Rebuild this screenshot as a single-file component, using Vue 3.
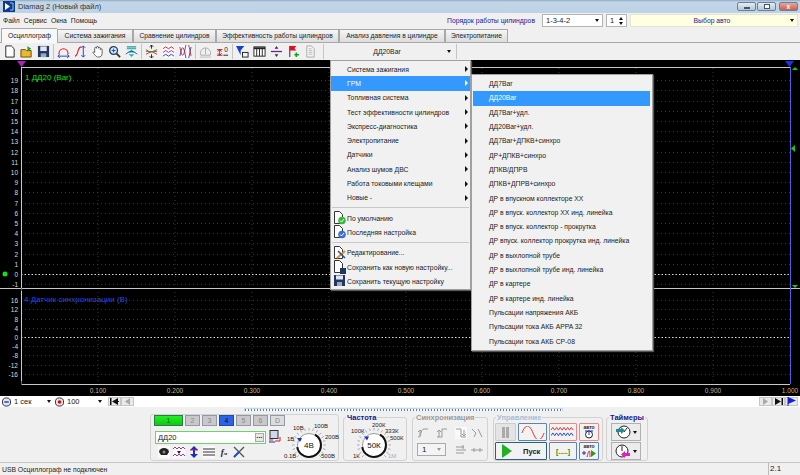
<template>
  <div class="app">
    <!-- window title -->
    <div class="titlebar">
      <svg class="app-icon" width="12" height="11" viewBox="0 0 12 11">
        <rect width="12" height="11" fill="#123a8c" />
        <path d="M2 2 L7 5.5 L2 9 Z" fill="#fff" />
        <path d="M7 2 h3 v7 h-3" fill="none" stroke="#7fc4ff" />
      </svg>
      <span class="title-text">Diamag 2 (Новый файл)</span>
      <div class="win-buttons">
        <div class="win-btn"><i class="w-min"></i></div>
        <div class="win-btn"><i class="w-max"></i></div>
        <div class="win-btn close"><span>x</span></div>
      </div>
    </div>

    <!-- menu + cylinder order -->
    <div class="menubar">
      <span class="menu-link first">Файл</span>
      <span class="menu-link">Сервис</span>
      <span class="menu-link">Окна</span>
      <span class="menu-link">Помощь</span>
      <span class="order-label">Порядок работы цилиндров</span>
      <div class="combo order-combo"><span>1-3-4-2</span><b class="arrow"></b></div>
      <div class="combo spin"><span>1</span><div class="spin-arrows"><b class="up"></b><b class="arrow"></b></div></div>
      <div class="combo auto-combo"><span class="auto-text">Выбор авто</span><b class="arrow"></b></div>
    </div>

    <!-- tabs -->
    <div class="tabs">
      <div v-for="t in tabs" :key="t.name" class="tab" :class="{ active: t.active }" :style="{ width: t.w + 'px' }">{{ t.name }}</div>
    </div>

    <!-- toolbar -->
    <div class="toolbar">
      <svg class="tool" viewBox="0 0 14 14"><path d="M3 1h6l3 3v9H3z" fill="#fff" stroke="#222" /></svg>
      <svg class="tool" viewBox="0 0 14 14"><path d="M1 5h5l1 1h5v7H1z" fill="#e8b830" stroke="#6b4a00" /><path d="M8 1l4 3-4 3z" fill="#2a9a2a" /></svg>
      <svg class="tool" viewBox="0 0 14 14"><rect x="1" y="1" width="12" height="12" fill="#23365f" /><rect x="3.500" y="1.500" width="7" height="5" fill="#dfe7f5" /><rect x="4" y="9" width="6" height="4" fill="#9aa8c4" /></svg>
      <i class="tool-sep"></i>
      <svg class="tool" viewBox="0 0 14 14"><path d="M2 10C2 2 12 2 12 10" fill="none" stroke="#e02020" stroke-width="1.200" /><path d="M1 12h12M1 12l2-2M1 12l2 2M13 12l-2-2M13 12l-2 2" stroke="#1840c8" fill="none" /></svg>
      <svg class="tool" viewBox="0 0 14 14"><path d="M1 12C5 12 3 2 8 2" fill="none" stroke="#e02020" stroke-width="1.200" /><path d="M10 1v12M10 1l-2 2M10 1l2 2M10 13l-2-2M10 13l2-2" stroke="#1840c8" fill="none" /></svg>
      <svg class="tool" viewBox="0 0 14 14"><path d="M4 8V3.500a1 1 0 012 0V2.500a1 1 0 012 0V3.500a1 1 0 012 0V5a1 1 0 012 0V9c0 3-2 4-4 4S5 12 2 8c1-1 2 0 2 0z" fill="#fff" stroke="#333" stroke-width=".8" /></svg>
      <svg class="tool" viewBox="0 0 14 14"><circle cx="6" cy="6" r="4.200" fill="#cfe6ff" stroke="#2b3a55" stroke-width="1.400" /><path d="M9 9l4 4" stroke="#333" stroke-width="2" /><path d="M4 6h4M6 4v4" stroke="#1840c8" /></svg>
      <svg class="tool" viewBox="0 0 14 14"><path d="M2 2h10M2 4h10" stroke="#12a090" stroke-width="1.200" /><path d="M7 5L3 8h8zM7 13l-3-3h6z" fill="#18b8a8" /><path d="M1 10C4 6 10 6 13 10" fill="none" stroke="#2040c0" /></svg>
      <i class="tool-sep"></i>
      <svg class="tool" viewBox="0 0 14 14"><path d="M7 0v4M5 2l2-2 2 2M7 14v-4M5 12l2 2 2-2" stroke="#222" fill="none" /><path d="M1 5l5 3 7-3M1 10l6-3 6 3" stroke="#d03030" fill="none" /><path d="M1 7h12" stroke="#2a9a2a" /></svg>
      <svg class="tool on" viewBox="0 0 14 14"><path d="M1 4l3-2 3 2 3-2 3 2" stroke="#d02020" fill="none" /><path d="M1 8l3-2 3 2 3-2 3 2" stroke="#a030a0" fill="none" /><path d="M1 12l3-2 3 2 3-2 3 2" stroke="#2040d0" fill="none" /></svg>
      <svg class="tool on" viewBox="0 0 14 14"><path d="M1 12C3 0 5 0 7 12S11 12 13 2" stroke="#2040d0" fill="none" /><path d="M1 2C3 14 5 14 7 2S11 2 13 12" stroke="#d02020" fill="none" /></svg>
      <i class="tool-sep"></i>
      <svg class="tool" viewBox="0 0 14 14"><path d="M2 11a5.500 5.500 0 1110 0z" fill="none" stroke="#aaa" /><path d="M7 3v7" stroke="#aaa" /><path d="M1 13h12" stroke="#bbb" /></svg>
      <svg class="tool" viewBox="0 0 14 14"><path d="M1 5h6M1 11h6M4 5v6M2 7l2-2 2 2M2 9l2 2 2-2" stroke="#a02020" fill="none" /><text x="9" y="8" class="tool-num">0</text><path d="M8 11h5" stroke="#222" /></svg>
      <i class="tool-sep"></i>
      <svg class="tool" viewBox="0 0 14 14"><path d="M0 1h9L5 6v5z" fill="#1840d0" /><rect x="7" y="8" width="6" height="5" fill="none" stroke="#222" /></svg>
      <svg class="tool" viewBox="0 0 14 14"><rect x="1" y="2" width="12" height="10" fill="#fff" stroke="#222" /><path d="M1 3.500h12" stroke="#222" stroke-width="2" /><path d="M4 3v9M7 3v9M10 3v9" stroke="#222" /></svg>
      <svg class="tool" viewBox="0 0 14 14"><path d="M1 7h12" stroke="#7020a0" stroke-width="1.400" /><path d="M7 1l-2 3h4zM7 13l-2-3h4z" fill="#333" /></svg>
      <svg class="tool" viewBox="0 0 14 14"><path d="M3 1v12" stroke="#222" /><path d="M3 1h7l-2 2.500L10 6H3z" fill="#e01020" /><path d="M10 8v5M8 10.500h5" stroke="#10a020" stroke-width="1.500" /></svg>
      <svg class="tool" viewBox="0 0 14 14"><path d="M3 1h5l3 3v9H3z" fill="#f4f4f4" stroke="#aaa" /><path d="M5 4h3M5 6h4M5 8h4M5 10h4" stroke="#bbb" /></svg>
      <i class="tool-sep last"></i>
      <div class="preset"><span>ДД20Bar</span><b class="arrow"></b></div>
      <i class="tool-sep"></i>
    </div>

    <!-- scope plot -->
    <svg class="plot" width="800" height="336" viewBox="0 60 800 336">
      <rect x="0" y="60" width="800" height="336" fill="#000" />
      <line v-for="x in gridX" :key="'v' + x" :x1="x" y1="68" :x2="x" y2="384" class="grid" />
      <line v-for="t in ticksA" :key="'a' + t.v" x1="21" :y1="t.y" x2="790" :y2="t.y" :class="t.v === 0 ? 'zero' : 'grid'" />
      <line v-for="t in ticksB" :key="'b' + t.v" x1="21" :y1="t.y" x2="790" :y2="t.y" :class="t.v === 0 ? 'zero' : 'grid'" />
      <text v-for="t in ticksA" :key="'la' + t.v" x="18" :y="t.y + 2.500" class="tick" text-anchor="end">{{ t.v }}</text>
      <text v-for="t in ticksB" :key="'lb' + t.v" x="18" :y="t.y + 2.500" class="tick" text-anchor="end">{{ t.v }}</text>
      <text v-for="l in xLabels" :key="l.t" :x="l.x" y="393" class="xtick" text-anchor="middle">{{ l.t }}</text>
      <path d="M21 67.500H790M0 288.500H800M21.500 67V384M21 384.500H790" stroke="#c8c8c8" fill="none" />
      <path d="M790.500 67V384" stroke="#4a60e0" fill="none" />
      <path d="M21.500 288V291M21.500 381V385" stroke="#a030c0" fill="none" />
      <text x="25" y="80" class="ch-a">1 ДД20 (Bar)</text>
      <text x="24" y="302" class="ch-b">4 Датчик синхронизации (В)</text>
      <path d="M17 61h9l-4.500 6z" fill="#b020c0" />
      <path d="M785 61h9l-4.500 6z" fill="#1c30f0" />
      <path d="M795 67l3 3h-6z" fill="#18c818" />
      <path d="M792 285h6l-3 3z" fill="#18c818" />
      <path d="M795 145l-4 3.500 4 3.500z" fill="#18c818" />
      <circle cx="5" cy="274" r="2.500" fill="#18e018" />
    </svg>

    <!-- time scale + scroll -->
    <div class="scrollrow">
      <svg width="11" height="10" viewBox="0 0 11 11"><circle cx="5.500" cy="5.500" r="4.500" fill="#dfe6f5" stroke="#223" /><path d="M3 5.500h5" stroke="#1030a0" stroke-width="1.400" /></svg>
      <div class="flat-combo w1"><span>1 сек</span><b class="arrow"></b></div>
      <svg width="11" height="10" viewBox="0 0 11 11"><circle cx="5.500" cy="5.500" r="4.500" fill="#f4e0e0" stroke="#223" /><circle cx="5.500" cy="5.500" r="2" fill="#c01020" /></svg>
      <div class="flat-combo w2"><span>100</span><b class="arrow"></b></div>
      <div class="nav"><svg width="9" height="7" viewBox="0 0 9 7"><path d="M0 0h1.500v7H0zM8 0v7L2 3.500z" fill="#111" /><path d="M7 3h2v1H7z" fill="#111" /></svg></div>
      <div class="nav dim"><svg width="5" height="7" viewBox="0 0 5 7"><path d="M5 0v7L0 3.500z" fill="#aaa" /></svg></div>
      <div class="track"><div class="slider"></div></div>
      <div class="nav dim"><svg width="5" height="7" viewBox="0 0 5 7"><path d="M0 0v7l5-3.500z" fill="#aaa" /></svg></div>
      <div class="nav"><svg width="9" height="7" viewBox="0 0 9 7"><path d="M9 0H7.500v7H9zM1 0v7l6-3.500z" fill="#111" /></svg></div>
      <div class="nav"><svg width="9" height="9" viewBox="0 0 9 9"><path d="M1 0v9" stroke="#1020e0" /><path d="M1 0l8 3.500L1 7z" fill="#1020e0" /></svg></div>
    </div>

    <!-- bottom controls -->
    <div class="panel">
      <div class="group g-channel">
        <div class="channel-col">
          <div class="ch-buttons">
            <div class="ch-btn green">1</div>
            <div class="ch-btn">2</div>
            <div class="ch-btn">3</div>
            <div class="ch-btn blue">4</div>
            <div class="ch-btn">5</div>
            <div class="ch-btn">6</div>
            <div class="ch-btn last">D</div>
          </div>
          <div class="ch-input-row">
            <div class="ch-input"><span>ДД20</span><div class="dots">...</div></div>
            <svg class="ch-save" width="13" height="14" viewBox="0 0 13 14"><rect x="2" y="0.500" width="8" height="8" fill="#cfd8e6" stroke="#333" /><path d="M1 10h4M12 7v4H7" stroke="#d02020" fill="none" /><path d="M1 12h6" stroke="#1030d0" /></svg>
          </div>
          <div class="ch-tools">
            <svg class="ct on" viewBox="0 0 12 12"><path d="M1 6a5 4 0 0110 0l-2 3H3z" fill="#222" /><circle cx="6" cy="6" r="1.500" fill="#888" /></svg>
            <svg class="ct on" viewBox="0 0 12 12"><path d="M0 3l2-2 2 2 2-2 2 2 2-2 2 2M0 10l2-2 2 2 2-2 2 2 2-2 2 2" stroke="#a030b0" fill="none" /><path d="M4 5h4L6 8z" fill="#222" /></svg>
            <svg class="ct" viewBox="0 0 12 12"><path d="M6 0L2 4h3v4H2l4 4 4-4H7V4h3z" fill="#1830c0" /><path d="M2 4h8" stroke="#c02060" /></svg>
            <svg class="ct on" viewBox="0 0 12 12"><path d="M0 3h12M0 6h12M0 9h12" stroke="#333" /></svg>
            <span class="ct fx">f<small>м</small></span>
            <svg class="ct" viewBox="0 0 12 12"><path d="M1 11L11 1M1 1l10 10" stroke="#555" stroke-width="1.400" /><path d="M1 11l5-5" stroke="#2050c0" stroke-width="2" /></svg>
          </div>
        </div>
        <svg class="knob k-volt" width="66" height="40" viewBox="0 0 66 40">
          <g class="knob-ticks"><line v-for="a in knobTicks" :key="a" :x1="kx(a, 14.500)" :y1="ky(a, 14.500)" :x2="kx(a, 17)" :y2="ky(a, 17)" /></g>
          <circle cx="32" cy="24" r="11.500" fill="#fff" stroke="#999" />
          <path :d="knobArc" fill="none" stroke="#111" stroke-width="2" />
          <path d="M20 17h5l-2 4z" fill="#1830d0" />
          <text x="32" y="27" class="knob-mid" text-anchor="middle">4В</text>
          <text x="16" y="9" class="knob-l">10В</text>
          <text x="37" y="7" class="knob-l">100В</text>
          <text x="10" y="20" class="knob-l">1В</text>
          <text x="48" y="18" class="knob-l">200В</text>
          <text x="7" y="37" class="knob-l">0.1В</text>
          <text x="44" y="37" class="knob-l">500В</text>
        </svg>
      </div>
      <div class="group g-freq">
        <span class="legend navy">Частота</span>
        <svg class="knob k-freq" width="62" height="40" viewBox="0 0 62 40">
          <g class="knob-ticks"><line v-for="a in knobTicks" :key="a" :x1="kx(a, 14.500)" :y1="ky(a, 14.500)" :x2="kx(a, 17)" :y2="ky(a, 17)" /></g>
          <circle cx="32" cy="24" r="11.500" fill="#fff" stroke="#999" />
          <path :d="knobArc" fill="none" stroke="#111" stroke-width="2" />
          <path d="M22 15.500h5l-2 4z" fill="#1830d0" />
          <text x="32" y="27" class="knob-mid" text-anchor="middle">50К</text>
          <text x="9" y="12" class="knob-l">100К</text>
          <text x="30" y="6" class="knob-l">200К</text>
          <text x="43" y="12" class="knob-l">333К</text>
          <text x="48" y="19" class="knob-l">500К</text>
          <text x="11" y="37" class="knob-l">1К</text>
          <text x="46" y="37" class="knob-l dim-l">1М</text>
        </svg>
      </div>
      <div class="group g-sync">
        <span class="legend grey">Синхронизация</span>
        <div class="sync-row">
          <svg class="sy" viewBox="0 0 12 12"><path d="M1 10c4 0 2-8 6-8h4M3 3v7M1 5l2-2 2 2" stroke="#999" fill="none" /></svg>
          <svg class="sy" viewBox="0 0 12 12"><path d="M1 10h5V2h5M3 3v7M1 5l2-2 2 2" stroke="#999" fill="none" /></svg>
          <svg class="sy on" viewBox="0 0 12 12"><path d="M1 2h5v8h5M9 3v6M7 7l2 2 2-2" stroke="#999" fill="none" /></svg>
          <svg class="sy tight" viewBox="0 0 12 12"><path d="M1 2l4 4-2 4M7 2l4 8" stroke="#999" fill="none" /></svg>
        </div>
        <div class="sync-row second">
          <div class="sync-combo"><span>1</span><b class="arrow grey-a"></b></div>
          <svg class="sy wide" viewBox="0 0 12 12"><path d="M1 3h8M1 6h10M1 9h8M8 1v4" stroke="#999" fill="none" /></svg>
          <svg class="sy tight" viewBox="0 0 12 12"><path d="M0 6h12M3 4v4M9 4v4" stroke="#999" fill="none" /></svg>
        </div>
      </div>
      <div class="group g-ctrl">
        <span class="legend pale">Управление</span>
        <div class="ctrl-grid">
          <div class="cbtn pause"><i></i><i></i></div>
          <div class="cbtn sine">
            <svg width="24" height="13" viewBox="0 0 26 13"><path d="M1 7C5-3 9-3 13 7S21 17 25 7" stroke="#e02020" fill="none" /></svg>
          </div>
          <div class="cbtn redb">
            <svg width="24" height="14" viewBox="0 0 26 14"><path d="M0 5l2-3 2 3 2-3 2 3 2-3 2 3 2-3 2 3 2-3 2 3 2-3 2 3" stroke="#d83030" fill="none" /><path d="M0 11l2-3 2 3 2-3 2 3 2-3 2 3 2-3 2 3 2-3 2 3 2-3 2 3" stroke="#2040d0" fill="none" /></svg>
          </div>
          <div class="cbtn redb stack">
            <span class="auto-l">авто</span>
            <svg width="12" height="9" viewBox="0 0 12 9"><circle cx="6" cy="4.500" r="3.500" fill="#fff" stroke="#222" /><path d="M2 1l8 0M6 2v3" stroke="#1830c0" /></svg>
          </div>
          <div class="cbtn start">
            <svg width="12" height="14" viewBox="0 0 12 14"><path d="M1 0l10 7-10 7z" fill="#22b020" /></svg>
            <span>Пуск</span>
          </div>
          <div class="cbtn bracket"><span>[.....]</span></div>
          <div class="cbtn stack">
            <span class="auto-l">авто</span>
            <svg width="14" height="9" viewBox="0 0 14 9"><path d="M0 4h4M2 2v4" stroke="#1830c0" /><path d="M5 8C7 0 8 0 8 8" stroke="#d02020" fill="none" /><path d="M9 1l5 3.500L9 8z" fill="#20a020" /></svg>
          </div>
        </div>
      </div>
      <div class="group g-timer">
        <span class="legend navy">Таймеры</span>
        <div class="timer-btn">
          <svg width="16" height="14" viewBox="0 0 16 14"><circle cx="9" cy="7" r="6" fill="#fff" stroke="#222" /><path d="M9 7l3-4" stroke="#222" /><path d="M1 4h5V2l4 3.500L6 9V7H1z" fill="#208c90" /></svg>
          <b class="arrow"></b>
        </div>
        <div class="timer-btn">
          <svg width="16" height="14" viewBox="0 0 16 14"><circle cx="7" cy="7" r="6" fill="#fff" stroke="#222" /><path d="M7 7V2" stroke="#222" /><path d="M15 9h-5V7L6 10.500l4 3.500v-2h5z" fill="#e020c0" /></svg>
          <b class="arrow"></b>
        </div>
      </div>
    </div>

    <!-- status -->
    <div class="statusbar">
      <span class="status-main">USB Осциллограф не подключен</span>
      <span class="status-ver">2.1</span>
    </div>

    <!-- open menus -->
    <div class="popup menu1">
      <template v-for="m in menu1" :key="m.t">
        <hr v-if="m.sep" />
        <div class="item" :class="{ hot: m.hot }">
          <span class="item-icon">
            <svg v-if="m.icon" width="13" height="14" viewBox="0 0 13 14">
              <template v-if="m.icon === 'floppy'">
                <rect x="1" y="1" width="11" height="11" fill="#23365f" /><rect x="3" y="1.500" width="7" height="4" fill="#dfe7f5" /><rect x="4" y="8" width="5" height="4" fill="#9aa8c4" />
              </template>
              <template v-else>
                <path d="M1.500 0.500h5l3 3v9h-8z" fill="#fff" stroke="#333" />
                <circle v-if="m.icon === 'ok'" cx="9" cy="9.500" r="3.800" fill="#3cb83c" />
                <circle v-if="m.icon === 'last'" cx="9" cy="9.500" r="3.800" fill="#3a70d0" />
                <path v-if="m.icon === 'ok' || m.icon === 'last'" d="M7 9.500l1.500 1.500 2.500-3" stroke="#fff" fill="none" />
                <path v-if="m.icon === 'edit'" d="M4 12L12 5" stroke="#e09020" stroke-width="2" />
                <path v-if="m.icon === 'edit'" d="M5 5l7 7" stroke="#2050c0" stroke-width="1.500" />
                <rect v-if="m.icon === 'saveas'" x="7" y="8" width="6" height="6" fill="#23365f" />
              </template>
            </svg>
          </span>
          <span class="item-text">{{ m.t }}</span>
          <b v-if="m.sub" class="sub-arrow"></b>
        </div>
      </template>
    </div>
    <div class="popup menu2">
      <div v-for="(m, i) in menu2" :key="m" class="item2" :class="{ hot: i === 1 }">{{ m }}</div>
    </div>
  </div>
</template>

<script setup>
const tabs = [
  { name: 'Осциллограф', w: 56, active: true },
  { name: 'Система зажигания', w: 76 },
  { name: 'Сравнение цилиндров', w: 83 },
  { name: 'Эффективность работы цилиндров', w: 123 },
  { name: 'Анализ давления в цилиндре', w: 106 },
  { name: 'Электропитание', w: 63 },
]

const gridX = [98, 175, 252, 329, 406, 482, 559, 636, 713]

const ticksA = []
for (let v = 19; v >= -1; v--) ticksA.push({ v, y: Math.round(274 - v * 10.2) + 0.5 })
const ticksB = []
for (let v = 16; v >= -16; v -= 4) ticksB.push({ v, y: Math.round(337 - v * 2.31) + 0.5 })

const xLabels = gridX.map((x, i) => ({ x, t: '0.' + (i + 1) + '00' }))
xLabels.push({ x: 790, t: '1.000' })

// both knobs sit at the same spot in their own svg
const knobTicks = []
for (let a = -225; a <= 45; a += 15) knobTicks.push(a)
const kx = (a, r) => 32 + r * Math.cos((a * Math.PI) / 180)
const ky = (a, r) => 24 + r * Math.sin((a * Math.PI) / 180)
const knobArc = `M${kx(-60, 12)} ${ky(-60, 12)} A12 12 0 1 1 ${kx(170, 12)} ${ky(170, 12)}`

const menu1 = [
  { t: 'Система зажигания', sub: true },
  { t: 'ГРМ', sub: true, hot: true },
  { t: 'Топливная система', sub: true },
  { t: 'Тест эффективности цилиндров', sub: true },
  { t: 'Экспресс-диагностика', sub: true },
  { t: 'Электропитание', sub: true },
  { t: 'Датчики', sub: true },
  { t: 'Анализ шумов ДВС', sub: true },
  { t: 'Работа токовыми клещами', sub: true },
  { t: 'Новые -', sub: true },
  { t: 'По умолчанию', sep: true, icon: 'ok' },
  { t: 'Последняя настройка', icon: 'last' },
  { t: 'Редактирование...', sep: true, icon: 'edit' },
  { t: 'Сохранить как новую настройку...', icon: 'saveas' },
  { t: 'Сохранить текущую настройку', icon: 'floppy' },
]

const menu2 = [
  'ДД7Bar',
  'ДД20Bar',
  'ДД7Bar+удл.',
  'ДД20Bar+удл.',
  'ДД7Bar+ДПКВ+синхро',
  'ДР+ДПКВ+синхро',
  'ДПКВ/ДПРВ',
  'ДПКВ+ДПРВ+синхро',
  'ДР в впускном коллекторе ХХ',
  'ДР в впуск. коллектор ХХ инд. линейка',
  'ДР в впуск. коллектор - прокрутка',
  'ДР впуск. коллектор прокрутка инд. линейка',
  'ДР в выхлопной трубе',
  'ДР в выхлопной трубе инд. линейка',
  'ДР в картере',
  'ДР в картере инд. линейка',
  'Пульсации напряжения АКБ',
  'Пульсации тока АКБ APPA 32',
  'Пульсации тока АКБ CP-08',
]
</script>

<style>
html, body {
  margin: 0;
  background: #f0f0f0;
  overflow: hidden;
}
</style>

<style scoped>
.app {
  position: relative;
  width: 800px;
  height: 475px;
  overflow: hidden;
  background: #f0f0f0;
  font-family: "Liberation Sans", Arial, sans-serif;
  font-size: 6.8px;
  color: #222;
  display: flex;
  flex-direction: column;
}

.titlebar {
  height: 13px;
  display: flex;
  align-items: center;
  background: linear-gradient(#8fa9c2 0, #c3d6e8 2px, #bdd2e6 100%);
  padding-left: 3px;
  flex: none;
}
.title-text {
  margin-left: 3px;
  font-size: 7.5px;
  color: #333;
}
.win-buttons {
  margin-left: auto;
  margin-right: 2px;
  display: flex;
  gap: 1px;
}
.win-btn {
  width: 19px;
  height: 9px;
  border: 1px solid #6b7f95;
  border-radius: 2px;
  box-sizing: border-box;
  background: linear-gradient(#e4edf5, #b4c6d8);
  display: flex;
  align-items: center;
  justify-content: center;
}
.win-btn.close {
  background: linear-gradient(#e5a79c, #c9604f);
  color: #fff;
  font-weight: bold;
  line-height: 6px;
  margin-left: 2px;
}
.win-btn .w-min {
  width: 6px;
  height: 2px;
  margin-top: 3px;
  background: #fff;
  border: 1px solid #456;
  box-sizing: border-box;
}
.win-btn .w-max {
  width: 6px;
  height: 5px;
  background: #fff;
  border: 1px solid #456;
  box-sizing: border-box;
}

.menubar {
  height: 15px;
  display: flex;
  align-items: center;
  background: #f0f0f0;
  flex: none;
}
.menu-link {
  margin-left: 4px;
}
.menu-link.first {
  margin-left: 3px;
}
.order-label {
  margin-left: auto;
  color: #141a9c;
  margin-right: 7px;
}
.combo {
  height: 13px;
  box-sizing: border-box;
  background: #fff;
  border: 1px solid #b4b4b4;
  display: flex;
  align-items: center;
  padding: 0 3px;
  margin-right: 3px;
  font-size: 7.5px;
}
.order-combo {
  width: 61px;
}
.spin {
  width: 21px;
}
.auto-combo {
  width: 168px;
  margin-right: 2px;
  background: #ffffe1;
  border-color: #e4e4d0;
}
.auto-text {
  flex: 1;
  text-align: center;
  color: #141a9c;
  font-size: 6.8px;
}
.arrow {
  display: block;
  margin-left: auto;
  width: 0;
  height: 0;
  border-left: 2.5px solid transparent;
  border-right: 2.5px solid transparent;
  border-top: 3px solid #111;
}
.grey-a {
  border-top-color: #999;
}
.spin-arrows {
  margin-left: auto;
  display: flex;
  flex-direction: column;
  gap: 2px;
}
.spin-arrows .up {
  width: 0;
  height: 0;
  border-left: 2.5px solid transparent;
  border-right: 2.5px solid transparent;
  border-bottom: 3px solid #111;
}

.tabs {
  height: 15px;
  display: flex;
  align-items: flex-end;
  padding-left: 1px;
  border-bottom: 1px solid #a8a8a8;
  box-sizing: border-box;
  flex: none;
}
.tab {
  height: 13px;
  line-height: 12px;
  box-sizing: border-box;
  text-align: center;
  background: linear-gradient(#f6f6f6, #dcdcdc);
  border: 1px solid #a8a8a8;
  border-bottom: none;
  white-space: nowrap;
  font-size: 6.7px;
}
.tab.active {
  height: 15px;
  line-height: 14px;
  background: #f8f8f8;
  margin-bottom: -1px;
  border-right: 0;
}

.toolbar {
  height: 17px;
  display: flex;
  align-items: center;
  padding-left: 3px;
  gap: 4px;
  flex: none;
}
.tool {
  width: 13px;
  height: 13px;
  flex: none;
}
.tool.on {
  background: #fafafa;
}
.tool-num {
  font-size: 7px;
  fill: #222;
}
.tool-sep {
  width: 1px;
  height: 15px;
  margin: 0 -1px;
  background: #c4c4c4;
  flex: none;
}
.tool-sep.last {
  margin-left: auto;
}
.preset {
  width: 126px;
  height: 15px;
  display: flex;
  align-items: center;
  padding-right: 2px;
  box-sizing: border-box;
}
.preset span {
  flex: 1;
  text-align: center;
}
.toolbar > .tool-sep:last-child {
  margin-right: 343px;
}

.plot {
  display: block;
  flex: none;
}
.grid {
  stroke: #363636;
  stroke-width: 1;
  stroke-dasharray: 1 3;
}
.zero {
  stroke: #dcdcdc;
  stroke-width: 1;
  stroke-dasharray: 1.5 2;
}
.tick {
  font-size: 6.5px;
  fill: #d8d8d8;
}
.xtick {
  font-size: 6.5px;
  fill: #c9b48a;
}
.ch-a {
  font-size: 8px;
  fill: #14e014;
}
.ch-b {
  font-size: 8px;
  fill: #2a48e0;
}

.scrollrow {
  height: 11px;
  display: flex;
  align-items: center;
  padding-left: 1px;
  padding-right: 2px;
  box-sizing: border-box;
  background: #fff;
  flex: none;
}
.flat-combo {
  display: flex;
  align-items: center;
  height: 11px;
  padding: 0 3px 0 2px;
  box-sizing: border-box;
  font-size: 7.5px;
}
.w1 {
  width: 42px;
}
.w2 {
  width: 40px;
  margin-right: 3px;
}
.nav {
  width: 13px;
  height: 9px;
  background: #eaeaea;
  border: 1px solid #c6c6c6;
  box-sizing: border-box;
  display: flex;
  align-items: center;
  justify-content: center;
  flex: none;
}
.track {
  flex: 1;
  align-self: stretch;
  position: relative;
}
.slider {
  position: absolute;
  left: 110px;
  bottom: -4px;
  width: 319px;
  height: 3px;
  box-sizing: border-box;
  border: 1px solid #c8d4e8;
  border-bottom: 0;
  background: #fff repeating-linear-gradient(90deg, #4a7ad8 0 1px, transparent 1px 3px);
}

.panel {
  flex: 1;
  display: flex;
  align-items: flex-end;
  padding: 0 0 1px 150px;
  box-sizing: border-box;
  min-height: 0;
}
.group {
  position: relative;
  height: 44px;
  box-sizing: border-box;
  border: 1px solid #d2d2d2;
  border-radius: 3px;
  flex: none;
}
.legend {
  position: absolute;
  top: -4px;
  left: 2px;
  background: #f0f0f0;
  padding: 0 1px;
  font-weight: bold;
  font-size: 7.5px;
  line-height: 8px;
  white-space: nowrap;
}
.navy {
  color: #14188c;
}
.grey {
  color: #9a9a9a;
}
.pale {
  color: #a8bcd8;
}

.g-channel {
  width: 189px;
  height: 47px;
  margin-right: 4px;
  display: flex;
  align-items: flex-start;
  padding-left: 3px;
}
.channel-col {
  width: 123px;
  flex: none;
  display: flex;
  flex-direction: column;
}
.ch-buttons {
  display: flex;
  gap: 2px;
}
.ch-btn {
  width: 15px;
  height: 11px;
  line-height: 10px;
  box-sizing: border-box;
  text-align: center;
  background: #c9c9c9;
  border: 1px solid #8f9aa8;
  color: #888;
  font-size: 7px;
  flex: none;
}
.ch-btn.green {
  width: 29px;
  background: linear-gradient(#20f020, #10c810);
  border-color: #2a7a4a;
  color: #063;
}
.ch-btn.blue {
  background: #2a62e8;
  border-color: #244a9a;
  color: #021048;
}
.ch-btn.last {
  background: #dcdcdc;
}
.ch-input-row {
  display: flex;
  align-items: center;
  margin: 4px 0 0 1px;
  gap: 2px;
}
.ch-input {
  width: 111px;
  height: 13px;
  flex: none;
  box-sizing: border-box;
  border: 1px solid #70d070;
  background: #fff;
  display: flex;
  align-items: center;
  padding-left: 2px;
  font-size: 7.5px;
}
.ch-save {
  flex: none;
}
.dots {
  margin-left: auto;
  width: 9px;
  height: 9px;
  margin-right: 1px;
  background: #e8e8e8;
  border: 1px solid #aaa;
  box-sizing: border-box;
  line-height: 4px;
  text-align: center;
  font-weight: bold;
}
.ch-tools {
  display: flex;
  gap: 3px;
  margin: 2px 0 0 4px;
  align-items: center;
}
.ct {
  width: 12px;
  height: 12px;
  flex: none;
}
.ct.on {
  background: #fafafa;
}
.fx {
  font-family: "Liberation Serif", serif;
  font-style: italic;
  font-weight: bold;
  font-size: 9px;
  line-height: 12px;
  text-align: center;
}
.fx small {
  font-size: 5px;
}
.knob {
  flex: none;
  overflow: visible;
}
.k-volt {
  margin-top: 6px;
}
.k-freq {
  display: block;
  margin: 3px 0 0 -2px;
}
.knob-ticks line {
  stroke: #aaa;
  stroke-width: 1;
}
.knob-mid {
  font-size: 8px;
  fill: #111;
}
.knob-l {
  font-size: 6px;
  fill: #222;
}
.dim-l {
  fill: #aaa;
}

.g-freq {
  width: 64px;
  margin-right: 5px;
}
.g-sync {
  width: 76px;
  margin-right: 5px;
  padding: 9px 0 0 4px;
}
.sync-row {
  display: flex;
  gap: 7px;
  align-items: center;
}
.sync-row.second {
  margin-top: 4px;
}
.sy {
  width: 12px;
  height: 12px;
  flex: none;
}
.sy.on {
  background: #fafafa;
}
.sy.tight {
  margin-left: -3px;
}
.sy.wide {
  margin-left: 2px;
}
.sync-combo {
  width: 29px;
  height: 13px;
  box-sizing: border-box;
  border: 1px solid #aaa;
  background: #f4f4f4;
  display: flex;
  align-items: center;
  padding: 0 4px;
  font-size: 8px;
}

.g-ctrl {
  width: 110px;
  margin-right: 3px;
  padding: 5px 0 0 1px;
}
.ctrl-grid {
  display: grid;
  grid-template-columns: 21px 29px 28px 20px;
  grid-template-rows: 18px 18px;
  gap: 1px 2px;
}
.cbtn {
  box-sizing: border-box;
  border: 1px solid #5a86ac;
  border-radius: 1px;
  background: #f2f2f2;
  display: flex;
  align-items: center;
  justify-content: center;
}
.redb {
  border-color: #e88;
}
.pause {
  border-color: #ccc;
  gap: 1px;
  background: #e4e4e4;
}
.pause i {
  width: 3px;
  height: 11px;
  background: #aaa;
}
.stack {
  flex-direction: column;
}
.auto-l {
  font-size: 5px;
  line-height: 5px;
  font-weight: bold;
}
.start {
  grid-column: 1 / 3;
  gap: 10px;
  font-weight: bold;
  font-size: 7.5px;
  justify-content: flex-start;
  padding-left: 5px;
  border-color: #2e5c84;
}
.bracket {
  color: #1a8a1a;
  font-weight: bold;
}

.g-timer {
  width: 42px;
  padding: 5px 0 0 4px;
}
.timer-btn {
  width: 30px;
  height: 18px;
  margin-bottom: 1px;
  box-sizing: border-box;
  border: 1px solid #b0b0b0;
  background: #ececec;
  display: flex;
  align-items: center;
  padding: 0 3px;
}

.statusbar {
  height: 13px;
  flex: none;
  display: flex;
  align-items: center;
  border-top: 1px solid #c6c6c6;
  box-sizing: border-box;
}
.status-main {
  flex: 1;
  padding-left: 2px;
}
.status-ver {
  width: 30px;
  border-left: 1px solid #bbb;
  padding-left: 1px;
  font-size: 8px;
  line-height: 12px;
}

.popup {
  position: absolute;
  background: #f1f1f1;
  border: 1px solid #a0a0a0;
  box-sizing: border-box;
  box-shadow: 1px 1px 1px #555;
  white-space: nowrap;
}
.menu1 {
  left: 330px;
  top: 60px;
  width: 141px;
  height: 230px;
  padding-top: 1px;
}
.menu1 hr {
  border: 0;
  height: 1px;
  background: #c8c8c8;
  margin: 2px 1px 3px;
}
.item {
  height: 14.300px;
  display: flex;
  align-items: center;
}
.item-icon {
  width: 16px;
  display: flex;
  justify-content: center;
  flex: none;
}
.item.hot,
.item2.hot {
  background: #3399ff;
  color: #fff;
}
.sub-arrow {
  margin-left: auto;
  margin-right: 2px;
  width: 0;
  height: 0;
  border-top: 3px solid transparent;
  border-bottom: 3px solid transparent;
  border-left: 3px solid #111;
}
.item.hot .sub-arrow {
  border-left-color: #fff;
}
.menu2 {
  left: 471px;
  top: 74px;
  width: 182px;
  height: 277px;
  padding: 2px 2px 0 1px;
}
.item2 {
  height: 14.320px;
  line-height: 14.320px;
  padding-left: 16px;
}
</style>
